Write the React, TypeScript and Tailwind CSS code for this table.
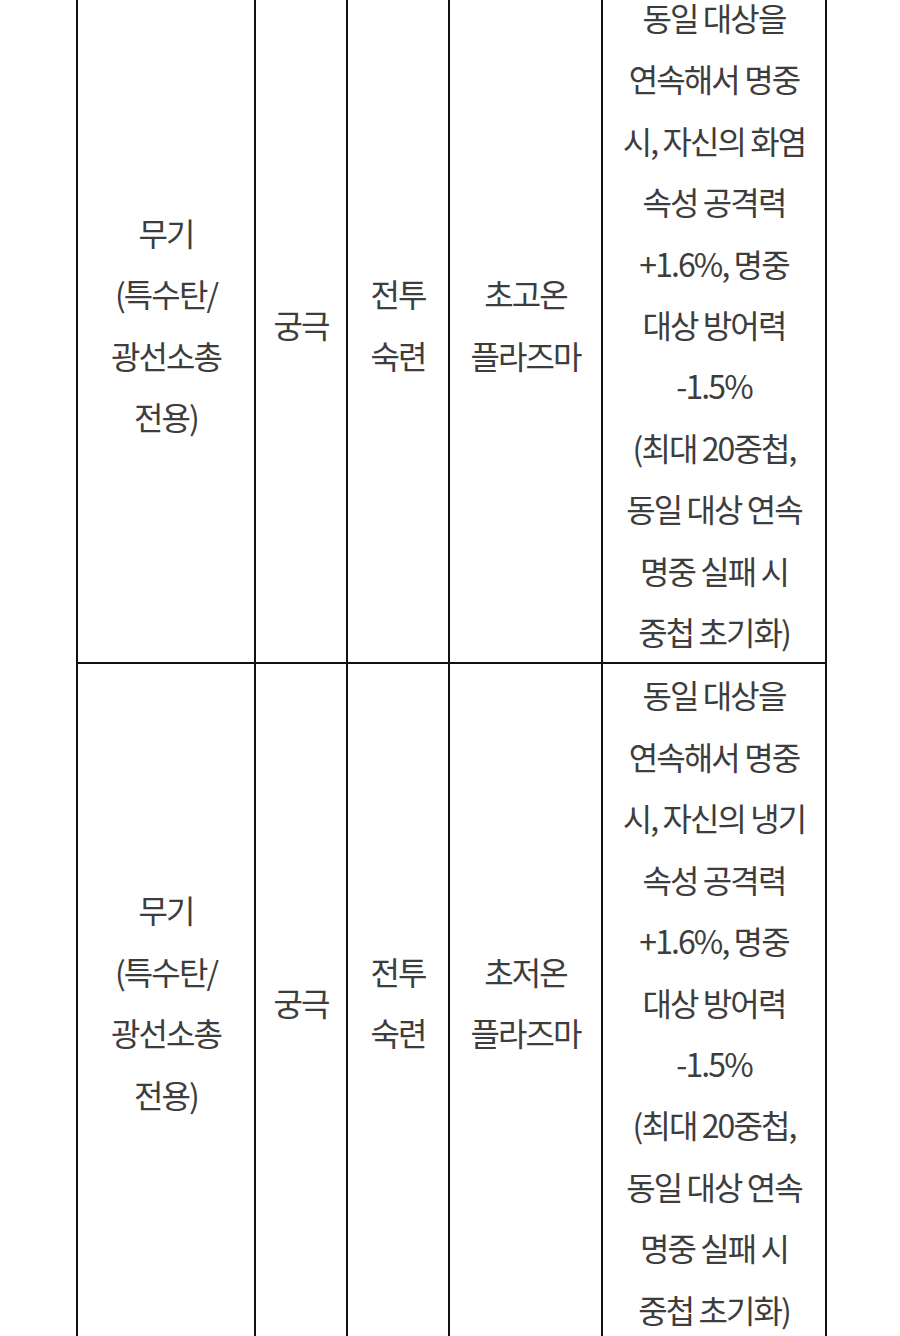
import React from "react";

interface Row {
    category: string[];
    grade: string;
    type: string[];
    name: string[];
    effect: string[];
}

const rows: Row[] = [
    {
        category: ["무기", "(특수탄/", "광선소총", "전용)"],
        grade: "궁극",
        type: ["전투", "숙련"],
        name: ["초고온", "플라즈마"],
        effect: [
            "동일 대상을 연속해서 명중 시, 자신의 화염 속성 공격력 +1.6%, 명중 대상 방어력 -1.5%",
            "(최대 20중첩, 동일 대상 연속 명중 실패 시 중첩 초기화)",
        ],
    },
    {
        category: ["무기", "(특수탄/", "광선소총", "전용)"],
        grade: "궁극",
        type: ["전투", "숙련"],
        name: ["초저온", "플라즈마"],
        effect: [
            "동일 대상을 연속해서 명중 시, 자신의 냉기 속성 공격력 +1.6%, 명중 대상 방어력 -1.5%",
            "(최대 20중첩, 동일 대상 연속 명중 실패 시 중첩 초기화)",
        ],
    },
];

const Lines = ({ lines }: { lines: string[] }) => (
    <>
        {lines.map((line, i) => (
            <div key={i}>{line}</div>
        ))}
    </>
);

export default function App() {
    return (
        <div
            className="bg-white min-h-screen overflow-hidden text-[#3d3d3d]"
            style={{ fontFamily: '"Noto Sans CJK KR", "Noto Sans", sans-serif' }}
        >
            <div className="-mt-[15px] ml-[76px] w-[751px]">
                <table className="w-full table-fixed border-collapse text-center text-[32px] leading-[61.4px] tracking-[-0.06em]">
                    <colgroup>
                        <col className="w-[178px]" />
                        <col className="w-[92px]" />
                        <col className="w-[102px]" />
                        <col className="w-[153px]" />
                        <col className="w-[224px]" />
                    </colgroup>
                    <tbody>
                        {rows.map((row, index) => (
                            <tr key={index}>
                                <td className="border-2 border-[#111] align-middle p-0">
                                    <Lines lines={row.category} />
                                </td>
                                <td className="border-2 border-[#111] align-middle p-0">
                                    {row.grade}
                                </td>
                                <td className="border-2 border-[#111] align-middle p-0">
                                    <Lines lines={row.type} />
                                </td>
                                <td className="border-2 border-[#111] align-middle p-0">
                                    <Lines lines={row.name} />
                                </td>
                                <td className="border-2 border-[#111] align-middle px-[12px] py-0 break-keep">
                                    <Lines lines={row.effect} />
                                </td>
                            </tr>
                        ))}
                    </tbody>
                </table>
            </div>
        </div>
    );
}
